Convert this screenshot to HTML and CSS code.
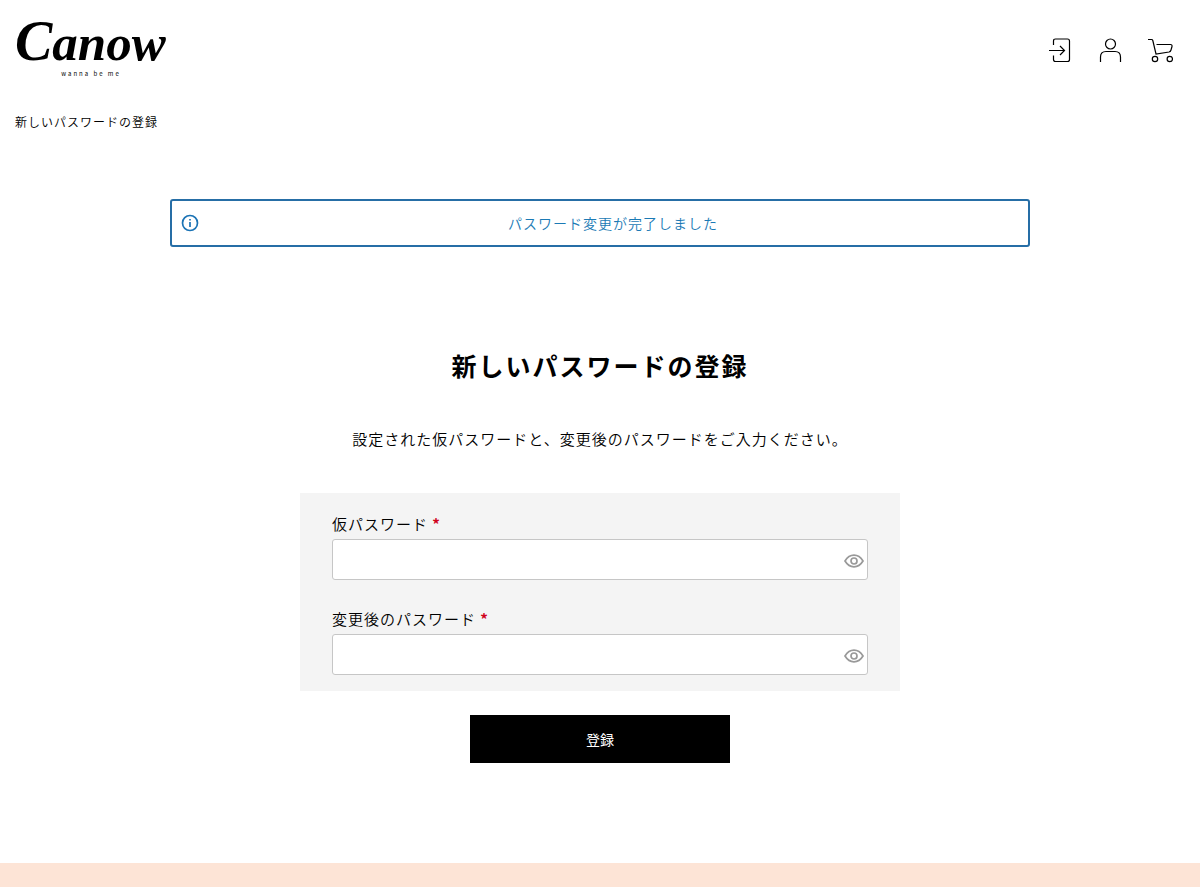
FILE: index.html
```html
<!DOCTYPE html>
<html lang="ja">
<head>
<meta charset="utf-8">
<meta name="viewport" content="width=device-width, initial-scale=1">
<title>新しいパスワードの登録</title>
<link rel="stylesheet" href="styles.css">
</head>
<body>
<header class="header">
  <a class="logo" href="#">
    <svg class="logo-mark" width="152" height="48" viewBox="0 0 152 48"><text class="logo-text" x="0" y="39"><tspan class="logo-initial">C</tspan>anow</text></svg>
    <span class="logo-tagline">wanna be me</span>
  </a>
  <nav class="nav">
    <a class="nav-link" href="#" aria-label="ログイン">
      <svg class="icon" width="26" height="26" viewBox="0 0 26 26"><path d="M6.500 8V4Q6.500 2 8.500 2H20.500Q22.500 2 22.500 4V22.500Q22.500 24.500 20.500 24.500H8.500Q6.500 24.500 6.500 22.500V18.500M2 13.500H17.500M13 9L17.500 13.500L13 18"/></svg>
    </a>
    <a class="nav-link" href="#" aria-label="マイページ">
      <svg class="icon" width="26" height="26" viewBox="0 0 26 26"><circle cx="13.500" cy="7" r="5"/><path d="M3.500 25V20Q3.500 14.500 9 14.500H18Q23.500 14.500 23.500 20V25"/></svg>
    </a>
    <a class="nav-link" href="#" aria-label="カート">
      <svg class="icon" width="26" height="26" viewBox="0 0 26 26"><path d="M1 2.500H4.500Q5.500 2.500 5.800 3.500L9 17L22 15Q23.500 14.700 24 13L25 9.500Q25.300 7.500 23.500 7.500H9.500"/><circle cx="8" cy="22" r="2.700"/><circle cx="22.800" cy="22" r="2.700"/></svg>
    </a>
  </nav>
</header>
<nav class="breadcrumb" aria-label="パンくず">新しいパスワードの登録</nav>
<main class="main">
  <div class="notice" role="status">
    <svg class="notice-icon" width="18" height="18" viewBox="0 0 18 18"><circle cx="9" cy="9" r="7.500"/><path d="M9 8V13M9 5V6.500"/></svg>
    <p class="notice-text">パスワード変更が完了しました</p>
  </div>
  <h1 class="title">新しいパスワードの登録</h1>
  <p class="lead">設定された仮パスワードと、変更後のパスワードをご入力ください。</p>
  <form class="form">
    <div class="panel">
      <div class="field">
        <label class="label" for="temporary">仮パスワード <span class="required">*</span></label>
        <div class="control">
          <input class="input" id="temporary" type="password">
          <button class="reveal" type="button" aria-label="パスワードを表示"><svg class="eye" width="20" height="14" viewBox="0 0 20 14"><path d="M1 7Q4.500 1.200 10 1.200T19 7Q15.500 12.800 10 12.800T1 7Z"/><circle cx="10" cy="7" r="3"/></svg></button>
        </div>
      </div>
      <div class="field">
        <label class="label" for="changed">変更後のパスワード <span class="required">*</span></label>
        <div class="control">
          <input class="input" id="changed" type="password">
          <button class="reveal" type="button" aria-label="パスワードを表示"><svg class="eye" width="20" height="14" viewBox="0 0 20 14"><path d="M1 7Q4.500 1.200 10 1.200T19 7Q15.500 12.800 10 12.800T1 7Z"/><circle cx="10" cy="7" r="3"/></svg></button>
        </div>
      </div>
    </div>
    <button class="submit" type="submit">登録</button>
  </form>
</main>
<footer class="footer"></footer>
</body>
</html>
```
FILE: styles.css
```css
* {
  box-sizing: border-box;
}

body {
  margin: 0;
  background: #fff;
  color: #000;
  font-family: "Noto Sans CJK JP", sans-serif;
  font-size: 15px;
  font-weight: 350;
  line-height: 24px;
  letter-spacing: 1px;
}

.header {
  display: flex;
  align-items: center;
  justify-content: space-between;
  height: 100px;
  padding: 0 15px;
}

.logo {
  display: flex;
  flex-direction: column;
  align-items: center;
  color: #000;
  text-decoration: none;
}

.logo-mark {
  display: block;
  overflow: visible;
}

.logo-text {
  font-family: "Liberation Serif", serif;
  font-size: 51px;
  font-style: italic;
  font-weight: 700;
  letter-spacing: 0;
}

.logo-initial {
  font-size: 56px;
}

.logo-tagline {
  font-size: 6px;
  font-weight: 400;
  line-height: 10px;
  letter-spacing: 2px;
}

.nav {
  display: flex;
}

.nav-link {
  display: flex;
  align-items: center;
  justify-content: center;
  width: 50px;
  height: 50px;
}

.icon {
  fill: none;
  stroke: #000;
  stroke-width: 1.2;
}

.breadcrumb {
  padding: 12px 15px 0;
  font-size: 12px;
  line-height: 20px;
}

.main {
  display: flex;
  flex-direction: column;
  max-width: 890px;
  margin: 0 auto;
  padding: 67px 15px 100px;
}

.notice {
  display: flex;
  align-items: center;
  gap: 8px;
  min-height: 48px;
  padding: 0 9px;
  border: 2px solid #266ea6;
  border-radius: 3px;
  color: #1b7ab5;
}

.notice-icon {
  flex: none;
  fill: none;
  stroke: #1b73b5;
  stroke-width: 1.7;
}

.notice-text {
  flex: 1;
  margin: 0;
  font-size: 14px;
  text-align: center;
}

.title {
  margin: 98px 0 0;
  font-size: 25px;
  font-weight: 700;
  line-height: 40px;
  letter-spacing: 2px;
  text-align: center;
}

.lead {
  margin: 42px 0 0;
  text-align: center;
}

.form {
  display: flex;
  flex-direction: column;
  align-items: center;
  gap: 24px;
  margin-top: 42px;
}

.panel {
  display: grid;
  gap: 27px;
  width: 100%;
  max-width: 600px;
  padding: 19px 32px 16px;
  background: #f4f4f4;
}

.field {
  display: grid;
  gap: 3px;
}

.required {
  color: #d0021b;
  font-weight: 700;
}

.control {
  position: relative;
}

.input {
  display: block;
  width: 100%;
  height: 41px;
  padding: 8px 32px 8px 8px;
  border: 1px solid #c6c6c6;
  border-radius: 3px;
  background: #fff;
  font: inherit;
}

.reveal {
  position: absolute;
  top: 1px;
  right: 0;
  display: flex;
  align-items: center;
  justify-content: center;
  width: 28px;
  height: 41px;
  padding: 0;
  border: 0;
  background: none;
}

.eye {
  fill: none;
  stroke: #999;
  stroke-width: 1.7;
}

.submit {
  width: 260px;
  height: 48px;
  padding: 0;
  border: 0;
  background: #000;
  color: #fff;
  font-family: inherit;
  font-size: 14px;
  font-weight: 400;
}

.footer {
  min-height: 24px;
  background: #fde4d6;
}
```
